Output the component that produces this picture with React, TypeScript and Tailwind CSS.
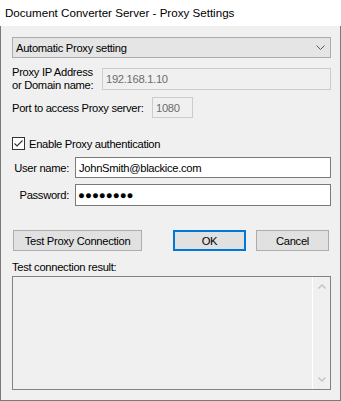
import React from "react";

export default function App() {
  const font = { fontFamily: '"Liberation Sans", Arial, sans-serif' };
  return (
    <div
      className="w-[341px] h-[401px] flex flex-col leading-[14px] text-black whitespace-nowrap"
      style={font}
    >
      <div className="h-[26px] bg-white flex items-center pl-[5px] text-[11.6px]">
        Document Converter Server - Proxy Settings
      </div>
      <div className="flex-1 bg-[#f0f0f0] border-x border-b border-[#7a7a7a] pl-[11px] pr-[9px] pt-[11px] pb-[10px] flex flex-col text-[11.2px] tracking-[-0.3px]">
        {/* combo */}
        <div className="h-[21px] bg-[#e5e5e5] border border-[#acacac] flex items-center pl-[3px] pr-[5px] justify-between">
          <span>Automatic Proxy setting</span>
          <svg width="9" height="6" viewBox="0 0 9 6">
            <path d="M0.5 0.5 L4.5 4.5 L8.5 0.5" fill="none" stroke="#5a5a5a" strokeWidth="1" />
          </svg>
        </div>
        {/* proxy ip */}
        <div className="flex mt-[10px] items-start h-[22px]">
          <div className="w-[90px] shrink-0 leading-[13px] -mt-[2px]">
            Proxy IP Address
            <br />
            or Domain name:
          </div>
          <div className="flex-1 h-[22px] border border-[#cccccc] bg-[#f0f0f0] flex items-center pl-[3px] text-[#6d6d6d]">
            192.168.1.10
          </div>
        </div>
        {/* port */}
        <div className="flex mt-[7px] items-center">
          <div className="w-[140px] shrink-0">Port to access Proxy server:</div>
          <div className="w-[41px] h-[21px] border border-[#cccccc] bg-[#f0f0f0] flex items-center pl-[3px] text-[#6d6d6d]">
            1080
          </div>
        </div>
        {/* checkbox */}
        <div className="flex mt-[19px] items-center h-[13px]">
          <div className="w-[13px] h-[13px] shrink-0 border border-[#333333] bg-white flex items-center justify-center">
            <svg width="11" height="11" viewBox="0 0 11 11">
              <path d="M1.5 5.5 L4 8 L9.5 2.5" fill="none" stroke="#333333" strokeWidth="1.1" />
            </svg>
          </div>
          <span className="ml-[4px]">Enable Proxy authentication</span>
        </div>
        {/* user name */}
        <div className="flex mt-[7px] items-center">
          <div className="w-[63px] shrink-0 text-right pr-[6px]">User name:</div>
          <div className="flex-1 h-[21px] border border-[#7a7a7a] bg-white flex items-center pl-[3px]">
            JohnSmith@blackice.com
          </div>
        </div>
        {/* password */}
        <div className="flex mt-[6px] items-center">
          <div className="w-[63px] shrink-0 text-right pr-[6px]">Password:</div>
          <div className="flex-1 h-[22px] border border-[#7a7a7a] bg-white flex items-center pl-[2px] text-[11.5px] tracking-[0px]">
            ●●●●●●●●
          </div>
        </div>
        {/* buttons */}
        <div className="flex mt-[24px] items-center">
          <div className="ml-[1px] w-[129px] h-[21px] bg-[#e1e1e1] border border-[#adadad] flex items-center justify-center">
            Test Proxy Connection
          </div>
          <div className="ml-[31px] w-[73px] h-[21px] bg-[#e1e1e1] border-2 border-[#0078d7] flex items-center justify-center">
            OK
          </div>
          <div className="ml-[10px] w-[73px] h-[21px] bg-[#e1e1e1] border border-[#adadad] flex items-center justify-center">
            Cancel
          </div>
        </div>
        <div className="mt-[9px] h-[14px] flex items-center">Test connection result:</div>
        {/* textarea */}
        <div className="mt-[2px] flex-1 border border-[#828282] bg-[#f0f0f0] flex">
          <div className="flex-1" />
          <div className="w-[18px] border-l border-white flex flex-col items-center justify-between py-[7px]">
            <svg width="8" height="5" viewBox="0 0 8 5">
              <path d="M0.5 4.5 L4 1 L7.5 4.5" fill="none" stroke="#c2c2c2" strokeWidth="1.4" />
            </svg>
            <svg width="8" height="5" viewBox="0 0 8 5">
              <path d="M0.5 0.5 L4 4 L7.5 0.5" fill="none" stroke="#c2c2c2" strokeWidth="1.4" />
            </svg>
          </div>
        </div>
      </div>
    </div>
  );
}
